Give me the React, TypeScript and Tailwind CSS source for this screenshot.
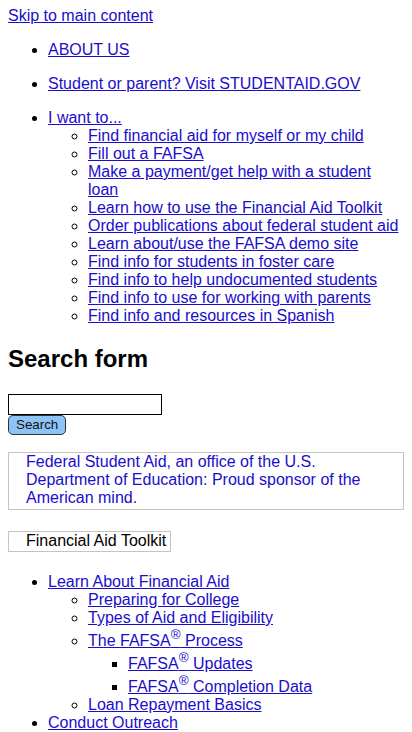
const link = "text-[#1a0dcc] underline";

function Sup() {
  return <sup className="static align-[7px] text-[smaller] leading-[normal]">®</sup>;
}

const iWant = [
  "Find financial aid for myself or my child",
  "Fill out a FAFSA",
  "Make a payment/get help with a student loan",
  "Learn how to use the Financial Aid Toolkit",
  "Order publications about federal student aid",
  "Learn about/use the FAFSA demo site",
  "Find info for students in foster care",
  "Find info to help undocumented students",
  "Find info to use for working with parents",
  "Find info and resources in Spanish",
];

export default function App() {
  return (
    <div className="bg-white min-h-[732px] px-2 pt-[7px] pb-2 text-black text-[16px] leading-[normal] font-['Liberation_Sans',Arial,sans-serif]">
      <a href="#main" className={link}>Skip to main content</a>

      <ul className="list-disc pl-10 my-4">
        <li className="my-4">
          <a href="#" className={link}>ABOUT US</a>
        </li>
        <li className="my-4">
          <a href="#" className={link}>Student or parent? Visit STUDENTAID.GOV</a>
        </li>
        <li className="my-4">
          <a href="#" className={link}>I want to...</a>
          <ul className="list-[circle] pl-10">
            {iWant.map((t) => (
              <li key={t}>
                <a href="#" className={link}>{t}</a>
              </li>
            ))}
          </ul>
        </li>
      </ul>

      <h2 className="text-[24px] font-bold mt-[19.92px] mb-[21px]">Search form</h2>

      <form className="mb-[17px]" onSubmit={(e) => e.preventDefault()}>
        <input type="text" className="block w-[154px] h-[21px] border border-black px-[2px] text-[13px] outline-none" />
        <button
          type="submit"
          className="block h-[20px] px-[7px] bg-[#8ec3f7] border border-[#333] rounded-[5px] text-[13.33px] leading-[18px] text-[#111]"
        >
          Search
        </button>
      </form>

      <div className="border border-[#c4c4c4] pl-[17px] pb-[2px]">
        <a href="#" className="text-[#1a0dcc]">
          Federal Student Aid, an office of the U.S. Department of Education: Proud sponsor of the American mind.
        </a>
      </div>

      <div className="mt-[21px] inline-block border border-[#c4c4c4] pl-[17px] pr-[4px] pb-[1px]">
        Financial Aid Toolkit
      </div>

      <ul className="list-disc pl-10 mt-[21px]">
        <li>
          <a href="#" className={link}>Learn About Financial Aid</a>
          <ul className="list-[circle] pl-10">
            <li><a href="#" className={link}>Preparing for College</a></li>
            <li><a href="#" className={link}>Types of Aid and Eligibility</a></li>
            <li>
              <a href="#" className={link}>The FAFSA<Sup /> Process</a>
              <ul className="list-[square] pl-10">
                <li><a href="#" className={link}>FAFSA<Sup /> Updates</a></li>
                <li><a href="#" className={link}>FAFSA<Sup /> Completion Data</a></li>
              </ul>
            </li>
            <li><a href="#" className={link}>Loan Repayment Basics</a></li>
          </ul>
        </li>
        <li><a href="#" className={link}>Conduct Outreach</a></li>
      </ul>
    </div>
  );
}
